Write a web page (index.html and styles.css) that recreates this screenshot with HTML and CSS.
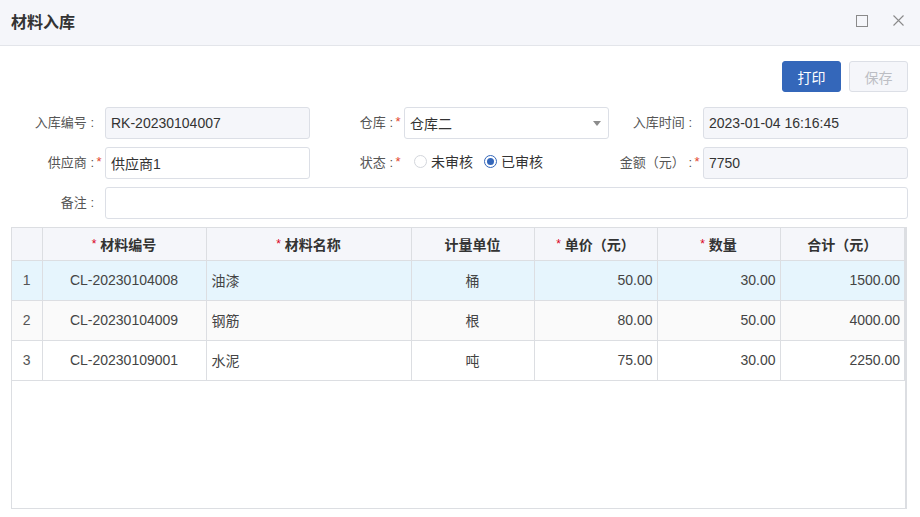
FILE: index.html
```html
<!DOCTYPE html>
<html lang="zh-CN">
<head>
<meta charset="utf-8">
<title>材料入库</title>
<link rel="stylesheet" href="styles.css">
</head>
<body>
<div class="dialog">
  <div class="dlg-header">
    <div class="dlg-title">材料入库</div>
    <div class="dlg-tools">
      <svg class="tool" width="12" height="12" viewBox="0 0 12 12"><rect x="0.5" y="0.5" width="11" height="11" fill="none" stroke="#8a8a8a" stroke-width="1"/></svg>
      <svg class="tool" width="11" height="11" viewBox="0 0 11 11"><path d="M0.5 0.5 L10.5 10.5 M10.5 0.5 L0.5 10.5" stroke="#8a8a8a" stroke-width="1.1" fill="none"/></svg>
    </div>
  </div>
  <div class="dlg-body">
    <div class="toolbar">
      <button class="btn btn-primary">打印</button>
      <button class="btn btn-disabled">保存</button>
    </div>
    <div class="form">
      <div class="label">入库编号 :<span class="req"></span></div>
      <div class="input readonly">RK-20230104007</div>
      <div class="label">仓库 :<span class="req">*</span></div>
      <div class="input select">仓库二<span class="caret"></span></div>
      <div class="label">入库时间 :<span class="req"></span></div>
      <div class="input readonly">2023-01-04 16:16:45</div>

      <div class="label">供应商 :<span class="req">*</span></div>
      <div class="input">供应商1</div>
      <div class="label">状态 :<span class="req">*</span></div>
      <div class="radios">
        <span class="radio"><span class="dot"></span>未审核</span>
        <span class="radio checked"><span class="dot"></span>已审核</span>
      </div>
      <div class="label">金额（元） :<span class="req">*</span></div>
      <div class="input readonly">7750</div>

      <div class="label">备注 :<span class="req"></span></div>
      <div class="input wide"></div>
    </div>
    <div class="grid">
      <table>
        <colgroup>
          <col style="width:30px"><col style="width:164px"><col style="width:205px"><col style="width:123px"><col style="width:123px"><col style="width:123px"><col>
        </colgroup>
        <thead>
          <tr>
            <th></th>
            <th><span class="star">*</span>材料编号</th>
            <th><span class="star">*</span>材料名称</th>
            <th>计量单位</th>
            <th><span class="star">*</span>单价（元）</th>
            <th><span class="star">*</span>数量</th>
            <th>合计（元）</th>
          </tr>
        </thead>
        <tbody>
          <tr class="sel">
            <td class="idx">1</td><td class="c">CL-20230104008</td><td class="l">油漆</td><td class="c">桶</td><td class="r">50.00</td><td class="r">30.00</td><td class="r">1500.00</td>
          </tr>
          <tr class="alt">
            <td class="idx">2</td><td class="c">CL-20230104009</td><td class="l">钢筋</td><td class="c">根</td><td class="r">80.00</td><td class="r">50.00</td><td class="r">4000.00</td>
          </tr>
          <tr>
            <td class="idx">3</td><td class="c">CL-20230109001</td><td class="l">水泥</td><td class="c">吨</td><td class="r">75.00</td><td class="r">30.00</td><td class="r">2250.00</td>
          </tr>
        </tbody>
      </table>
    </div>
  </div>
</div>
</body>
</html>
```
FILE: styles.css
```css
* { box-sizing: border-box; }
html, body { margin: 0; padding: 0; background: #fff; }
body {
  font-family: "Liberation Sans", "Noto Sans CJK SC", sans-serif;
  font-size: 14px;
  color: #333;
  width: 920px;
  height: 517px;
  overflow: hidden;
}
.dlg-header {
  height: 46px;
  background: #f5f6fa;
  border-bottom: 1px solid #e3e5ea;
  display: flex;
  align-items: center;
  justify-content: space-between;
  padding: 0 16px 0 11px;
}
.dlg-title {
  font-size: 16px;
  font-weight: bold;
  color: #333;
  margin-top: -4px;
}
.dlg-tools {
  display: flex;
  align-items: center;
  gap: 25px;
  margin-top: -4px;
}
.tool { display: block; }
.dlg-body {
  padding: 15px 12px 0 11px;
}
.toolbar {
  display: flex;
  justify-content: flex-end;
  gap: 8px;
  height: 31px;
}
.btn {
  width: 59px;
  height: 31px;
  border-radius: 3px;
  font-family: inherit;
  font-size: 14px;
  border: 1px solid transparent;
  padding: 0;
}
.btn-primary { background: #3467ba; color: #fff; border-color: #3467ba; }
.btn-disabled { background: #f5f6fa; color: #bcbec4; border-color: #dcdfe6; }
.form {
  margin-top: 15px;
  display: grid;
  grid-template-columns: 94px 205px 94px 205px 94px 205px;
  grid-auto-rows: 32px;
  row-gap: 8px;
}
.label {
  display: flex;
  align-items: center;
  justify-content: flex-end;
  font-size: 13px;
  color: #555;
  padding-right: 2px;
  padding-bottom: 3px;
}
.req {
  display: inline-block;
  width: 8px;
  color: #e2442f;
  font-size: 13px;
  text-align: center;
  margin-left: 1px;
}
.input {
  border: 1px solid #dcdfe6;
  border-radius: 3px;
  background: #fff;
  display: flex;
  align-items: center;
  padding: 0 5px;
  font-size: 14px;
  color: #333;
}
.input.readonly { background: #f5f6fa; }
.input.wide { grid-column: 2 / 7; }
.input.select { justify-content: space-between; padding-right: 7px; }
.caret {
  width: 0; height: 0;
  border-left: 4px solid transparent;
  border-right: 4px solid transparent;
  border-top: 5px solid #8c8c8c;
}
.radios {
  display: flex;
  align-items: center;
  gap: 11px;
  padding-left: 10px;
  margin-top: -4px;
  font-size: 14px;
  color: #333;
}
.radio { display: inline-flex; align-items: center; gap: 4px; }
.dot {
  width: 13px; height: 13px;
  border-radius: 50%;
  border: 1px solid #d3d6dc;
  background: #fff;
  display: inline-block;
  position: relative;
}
.radio.checked .dot { border-color: #3467ba; }
.radio.checked .dot::after {
  content: "";
  position: absolute;
  left: 2px; top: 2px;
  width: 7px; height: 7px;
  border-radius: 50%;
  background: #3467ba;
}
.grid {
  margin-top: 8px;
  width: 896px;
  height: 282px;
  border: 1px solid #dcdee2;
  border-right-width: 2px;
}
table {
  border-collapse: collapse;
  table-layout: fixed;
  width: 893px;
  font-size: 14px;
}
th, td {
  border: 1px solid #dcdee2;
  padding: 0 4px;
  white-space: nowrap;
  overflow: hidden;
}
tr > :first-child { border-left: none; }
thead tr th { border-top: none; }
th {
  height: 32px;
  background: #f5f6fa;
  font-weight: bold;
  color: #333;
  text-align: center;
  font-size: 14px;
}
.star { color: #d9001b; font-weight: normal; font-size: 12px; margin-right: 4px; vertical-align: 2px; }
td { height: 40px; color: #444; }
tr.sel td { background: #e6f5fd; }
tr.alt td { background: #fafafa; }
td.idx { text-align: center; color: #555; }
td.c { text-align: center; }
td.l { text-align: left; padding-left: 5px; }
td.r { text-align: right; padding-right: 4px; }
```
